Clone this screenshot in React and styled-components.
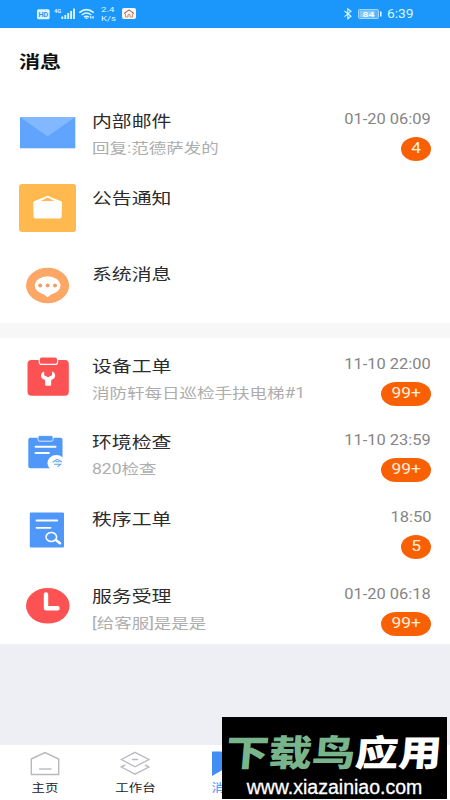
import styled, { createGlobalStyle } from 'styled-components';

const GlobalStyle = createGlobalStyle`
    * { box-sizing: border-box; }
    body {
        margin: 0;
        background: #eeeff5;
        font-family: Roboto, "Noto Sans CJK SC", sans-serif;
    }
    svg { display: block; flex: none; }
`

const Screen = styled.div`
    position: relative;
    width: 450px;
    height: 800px;
    display: flex;
    flex-direction: column;
    background: #eeeff5;
    overflow: hidden;
`

// text drawn wider than the font's own shapes
const Wide = styled.span`
    display: inline-block;
    white-space: nowrap;
    font-size: ${props => props.$size}px;
    line-height: ${props => props.$line || 20}px;
    font-weight: ${props => props.$weight || 400};
    color: ${props => props.$color};
    transform: scaleX(${props => props.$stretch || 1.24});
    transform-origin: ${props => props.$origin || "left"} center;
`

const StatusBar = styled.header`
    flex: none;
    height: 27.6px;
    display: flex;
    align-items: center;
    justify-content: space-between;
    padding: 0 38px 0 37px;
    background: #1b97fb;
    color: #d9f6ff;
`

const StatusGroup = styled.div`
    display: flex;
    align-items: center;
    height: 100%;
`

const Speed = styled.div`
    display: flex;
    flex-direction: column;
    width: 27px;
    padding-left: 6px;
`

const Clock = styled.div`
    width: 25px;
    margin-left: 5px;
`

const TitleBar = styled.div`
    flex: none;
    height: 65.6px;
    padding: 24.4px 19px 0;
    background: white;
`

const Section = styled.ul`
    flex: none;
    list-style: none;
    margin: 0;
    padding: 0;
    background: white;
`

const Divider = styled.div`
    flex: none;
    height: 15px;
    background: #f7f7f7;
`

const Row = styled.li`
    display: flex;
    height: 76.6px;
    padding: 14.4px 19px 0 19px;
`

const RowText = styled.div`
    flex: 1;
    display: flex;
    flex-direction: column;
    align-items: flex-start;
    gap: 6px;
    margin: 4.4px 0 0 15.5px;
`

const RowMeta = styled.div`
    display: flex;
    flex-direction: column;
    align-items: flex-end;
    gap: 8px;
    margin-top: 1.4px;
`

const Badge = styled.span`
    display: flex;
    align-items: center;
    justify-content: center;
    width: ${props => props.$long ? 50 : 30}px;
    height: 24px;
    border-radius: ${props => props.$long ? "15px / 12px" : "50%"};
    background: #f96004;
`

const TabBar = styled.nav`
    display: grid;
    grid-template-columns: repeat(5, 90px);
    height: 55.5px;
    margin-top: auto;
    flex: none;
    background: white;
`

const Tab = styled.div`
    display: flex;
    flex-direction: column;
    align-items: center;
    padding-top: 6px;
    gap: 4px;
`

const Watermark = styled.div`
    position: absolute;
    left: 222px;
    top: 717px;
    width: 225px;
    height: 82px;
    display: flex;
    flex-direction: column;
    align-items: center;
    padding-top: 11.5px;
    background: black;
`

const Logo = styled.div`
    font: 900 36px/42px "Noto Sans CJK SC", sans-serif;
    white-space: nowrap;
    color: white;
    transform: scaleX(1.2) skewX(-4deg);
    span { color: #79b58c; }
`

const Site = styled.div`
    font: 19.5px/24px "Liberation Sans", sans-serif;
    margin-top: 4px;
    color: white;
    -webkit-text-stroke: 0.3px white;
`

function MailIcon() {
    return (
        <svg width="57" height="48">
            <rect x="1" y="9" width="55.3" height="31.3" fill="#60a4fe" />
            <path d="M1 9H56.3L28.6 28.5Z" fill="#82b8ff" />
        </svg>
    )
}

function NoticeIcon() {
    return (
        <svg width="57" height="48">
            <rect width="57.2" height="48" rx="3" fill="#ffb94f" />
            <path d="M15.8 17L28.6 11.8L41.4 17Q43 17 43 19L42.6 33Q42.6 34.4 41 34.4H16.2Q14.6 34.4 14.6 33L14.2 19Q14.2 17 15.8 17Z" fill="white" />
            <path d="M21.8 17L28.6 13.6L35.5 17Z" fill="#ffb94f" />
        </svg>
    )
}

function ChatIcon() {
    return (
        <svg width="57" height="48">
            <ellipse cx="28.6" cy="24.5" rx="21.5" ry="17.8" fill="#fda766" />
            <ellipse cx="28.6" cy="24.4" rx="12.8" ry="9.2" fill="white" />
            <path d="M23 32L28.5 36.3L34 32Z" fill="white" />
            <g fill="#f0a069">
                <circle cx="21.2" cy="24.4" r="2" />
                <circle cx="28.6" cy="24.4" r="2" />
                <circle cx="36" cy="24.4" r="2" />
            </g>
        </svg>
    )
}

function RepairIcon() {
    return (
        <svg width="57" height="48">
            <rect x="8.5" y="8" width="41.3" height="35.8" rx="4" fill="#fd5253" />
            <rect x="20.2" y="4.9" width="18.4" height="7.5" rx="2.5" fill="#fd5253" stroke="white" strokeWidth="1.2" />
            <path d="M25.2 19.4C21.7 20.6 21.1 24.3 23.3 26.5L26.1 28.2V32.4Q26.1 33.7 27.4 33.7H31Q32.2 33.7 32.2 32.4V28.2L34.8 26.5C37.2 24.2 36.5 20.6 33 19.4V23.2L29 25.2L25.2 23.2Z" fill="white" />
        </svg>
    )
}

function CheckIcon() {
    return (
        <svg width="57" height="48">
            <rect x="9.3" y="8.8" width="34.2" height="30.4" rx="2" fill="#4f97f8" />
            <rect x="19" y="6.6" width="15" height="5.6" rx="1.5" fill="#4f97f8" stroke="white" strokeWidth="0.8" />
            <path d="M16.6 17.7H36.5M16.6 24.1H29.8" stroke="white" strokeWidth="2" strokeLinecap="round" />
            <ellipse cx="37.4" cy="34.1" rx="9" ry="8" fill="white" />
            <path d="M33.5 33.2L38.3 30.3L43 33M36.5 32.8H40.5M35 35.3H41.5L38.5 37.8" fill="none" stroke="#5fa1f5" strokeWidth="1.1" />
        </svg>
    )
}

function OrderIcon() {
    return (
        <svg width="57" height="48">
            <rect x="10.8" y="6.5" width="34.2" height="35" rx="1" fill="#4f97f8" />
            <path d="M17.5 14.5H38.3M17.5 21.8H31.5" stroke="white" strokeWidth="1.8" strokeLinecap="round" />
            <ellipse cx="32.3" cy="31" rx="5.3" ry="4.5" fill="none" stroke="white" strokeWidth="1.5" />
            <path d="M36.8 34L41 37.3" stroke="white" strokeWidth="2.5" strokeLinecap="round" />
        </svg>
    )
}

function ServiceIcon() {
    return (
        <svg width="57" height="48">
            <ellipse cx="28.8" cy="23.8" rx="21.8" ry="17.8" fill="#fd5253" />
            <path d="M27 12.5V26.3H38.5" fill="none" stroke="white" strokeWidth="4.4" strokeLinecap="round" strokeLinejoin="round" />
        </svg>
    )
}

function SignalIcons() {
    return (
        <svg width="58" height="14" viewBox="37 7 58 14">
            <rect x="37" y="9.2" width="12.6" height="10" rx="1.5" fill="#d9f6ff" />
            <text x="38.4" y="17" fontSize="7.5" fontWeight="700" fill="#3098ef" textLength="9.8" lengthAdjust="spacingAndGlyphs">HD</text>
            <text x="54" y="13" fontSize="6" fontWeight="700" fill="#d9f6ff" textLength="7.2" lengthAdjust="spacingAndGlyphs">4G</text>
            <path d="M62.3 16.5V19M65.3 15V19M68.2 13V19M71.1 11V19M74 8.5V19" stroke="#d9f6ff" strokeWidth="1.9" />
            <path d="M79.3 12.6Q86.5 6.6 93.7 12.6M81.7 15Q86.5 11 91.3 15M84 17.2Q86.5 15.2 89 17.2" fill="none" stroke="#d9f6ff" strokeWidth="1.5" />
            <path d="M85.5 17.5H87.5V19H85.5ZM90 16.2H91.5V18.5H90ZM92.3 16.2H93.8V18.5H92.3Z" fill="#d9f6ff" />
        </svg>
    )
}

function HouseIcon() {
    return (
        <svg width="14" height="11">
            <rect width="14" height="11" rx="2" fill="#fff4ee" />
            <path d="M2 5.5L7 2L12 5.5" fill="none" stroke="#70605c" strokeWidth="1" />
            <path d="M3.5 5.5V9H6V6.5H8V9H10.5V5.5" fill="none" stroke="#d98e70" strokeWidth="1" />
        </svg>
    )
}

function PowerIcons() {
    return (
        <svg width="38" height="14" viewBox="344 7 38 14">
            <path d="M344.5 11L351 16.2L347.8 18.8V8.8L351 11.3L344.5 16.7" fill="none" stroke="#d9f6ff" strokeWidth="1.1" />
            <rect x="358.5" y="9.5" width="20" height="9" rx="1" fill="#5eb5fa" stroke="#9cd8ff" />
            <rect x="360" y="10.7" width="14.5" height="6.6" fill="#86c8fb" />
            <rect x="380" y="11.5" width="1.6" height="5" fill="#d9f6ff" />
            <text x="362.5" y="16.8" fontSize="7.5" fontWeight="700" fill="#f0fcff" textLength="12" lengthAdjust="spacingAndGlyphs">84</text>
        </svg>
    )
}

function HomeIcon() {
    return (
        <svg width="30" height="25" fill="none" stroke="#b8bac0" strokeWidth="1.4">
            <path d="M1.3 8L15 1.5L28.7 8V23.5H1.3Z" />
            <path d="M9 18H21.5" />
        </svg>
    )
}

function LayersIcon() {
    return (
        <svg width="30" height="25" fill="none" stroke="#b8bac0" strokeWidth="1.4">
            <path d="M15 1.3L29 8.5L15 15.8L1.3 8.5Z" />
            <path d="M12 8.5H18M5.3 14L1.3 16L15 23.2L29 16L25 14" />
        </svg>
    )
}

function MessageIcon() {
    return (
        <svg width="30" height="25">
            <path d="M2 0.5H28V25L15 17.5L2 25Z" fill="#438ef5" />
        </svg>
    )
}

const notices = [
    { icon: MailIcon, title: "内部邮件", text: "回复:范德萨发的", time: "01-20 06:09", count: "4" },
    { icon: NoticeIcon, title: "公告通知" },
    { icon: ChatIcon, title: "系统消息" },
];

const orders = [
    { icon: RepairIcon, title: "设备工单", text: "消防轩每日巡检手扶电梯#1", time: "11-10 22:00", count: "99+" },
    { icon: CheckIcon, title: "环境检查", text: "820检查", time: "11-10 23:59", count: "99+" },
    { icon: OrderIcon, title: "秩序工单", time: "18:50", count: "5" },
    { icon: ServiceIcon, title: "服务受理", text: "[给客服]是是是", time: "01-20 06:18", count: "99+" },
];

const tabs = [
    { icon: HomeIcon, label: "主页", color: "#222" },
    { icon: LayersIcon, label: "工作台", color: "#222" },
    { icon: MessageIcon, label: "消息", color: "#438ef5" },
];

function MessageList({ items }) {
    return (
        <Section>
            { items.map(({ icon: Icon, ...item }) => (
                <Row key={item.title}>
                    <Icon />
                    <RowText>
                        <Wide $size={16} $color="#2c2c2c">{item.title}</Wide>
                        {item.text && <Wide $size={14} $stretch={1.25} $color="#adadad">{item.text}</Wide>}
                    </RowText>
                    {item.time && (
                        <RowMeta>
                            <Wide $size={13.8} $stretch={1.19} $origin="right" $color="#858585">{item.time}</Wide>
                            <Badge $long={item.count.length > 1}>
                                <Wide $size={14.5} $stretch={1.2} $origin="center" $color="#fff0dc">{item.count}</Wide>
                            </Badge>
                        </RowMeta>
                    )}
                </Row>
            ))}
        </Section>
    )
}

function App() {
    return (
        <Screen>
            <GlobalStyle />
            <StatusBar>
                <StatusGroup>
                    <SignalIcons />
                    <Speed>
                        <Wide $size={8} $line={9} $stretch={1.2}>2.4</Wide>
                        <Wide $size={8} $line={9} $stretch={1.2}>K/s</Wide>
                    </Speed>
                    <HouseIcon />
                </StatusGroup>
                <StatusGroup>
                    <PowerIcons />
                    <Clock><Wide $size={12} $stretch={1.15}>6:39</Wide></Clock>
                </StatusGroup>
            </StatusBar>
            <TitleBar>
                <Wide $size={17} $weight={700} $color="#111">消息</Wide>
            </TitleBar>
            <MessageList items={notices} />
            <Divider />
            <MessageList items={orders} />
            <TabBar>
                { tabs.map(({ icon: Icon, label, color }) => (
                    <Tab key={label}>
                        <Icon />
                        <Wide $size={11} $line={18} $stretch={1.22} $origin="center" $color={color}>{label}</Wide>
                    </Tab>
                ))}
            </TabBar>
            <Watermark>
                <Logo><span>下载鸟</span>应用</Logo>
                <Site>www.xiazainiao.com</Site>
            </Watermark>
        </Screen>
    )
}

export default App;
